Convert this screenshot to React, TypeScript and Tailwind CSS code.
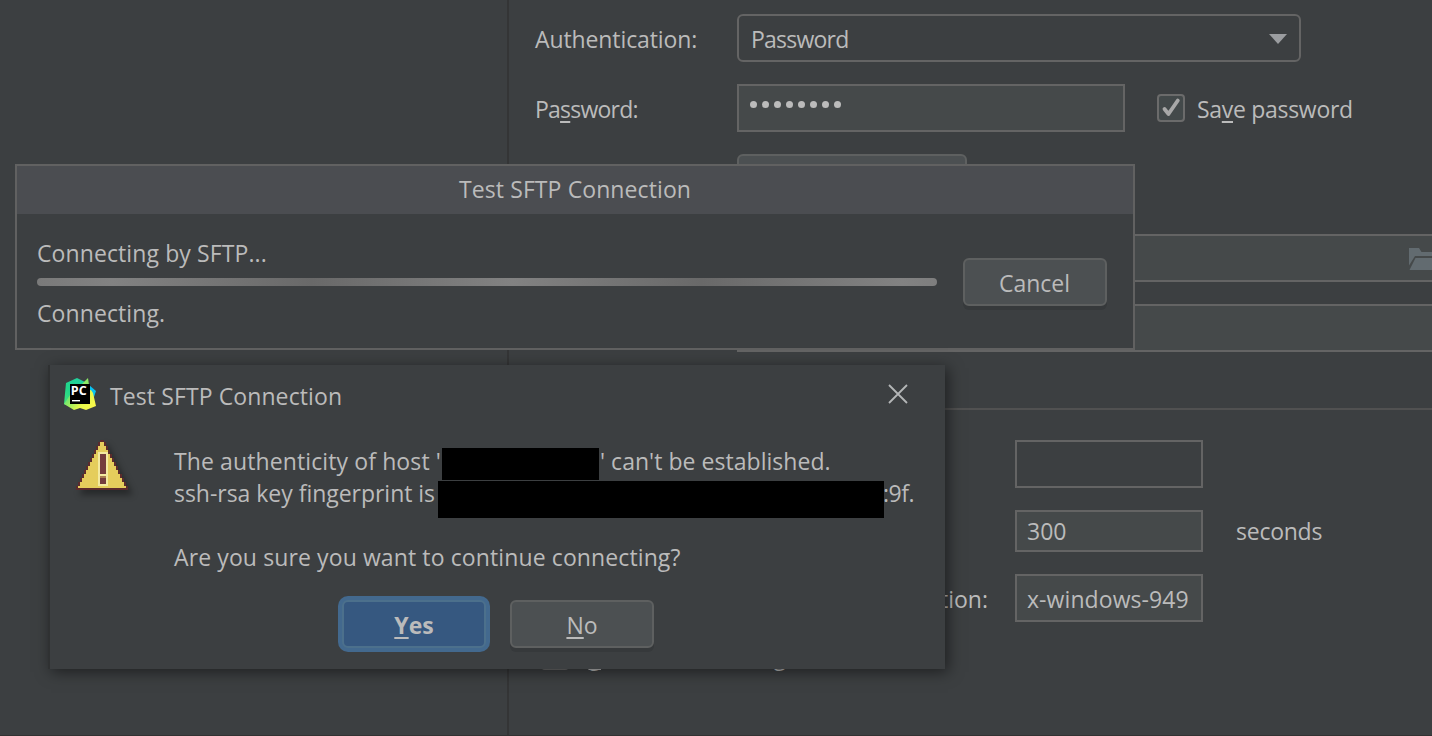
import type { ReactNode } from 'react';

const Mnemonic = ({ children }: { children: ReactNode }) => (
  <span className="underline decoration-2 underline-offset-[3px] [text-decoration-skip-ink:none]">{children}</span>
);

const Field = ({ className = '', children }: { className?: string; children?: ReactNode }) => (
  <div className={`flex shrink-0 items-center border-2 border-[#646464] ${className}`}>{children}</div>
);

function PyCharmLogo() {
  return (
    <svg width="32" height="32" viewBox="0 0 32 32" className="shrink-0">
      <defs>
        <linearGradient id="pcGreen" x1="0" y1="1" x2="0.7" y2="0">
          <stop offset="0" stopColor="#4be27a" />
          <stop offset="0.5" stopColor="#21d789" />
          <stop offset="1" stopColor="#21cfa0" />
        </linearGradient>
        <linearGradient id="pcYellow" x1="0" y1="0.3" x2="1" y2="0.8">
          <stop offset="0" stopColor="#4be27a" />
          <stop offset="0.6" stopColor="#e6f84b" />
          <stop offset="1" stopColor="#fcf84a" />
        </linearGradient>
      </defs>
      <path d="M25 7 L32 13 L30 19 L24 19Z" fill="#07c3f2" />
      <path d="M2 5 L13 0 L21 4 L25 15 L10 30 L0 26Z" fill="url(#pcGreen)" />
      <path d="M17 7 L24 0 L25 7Z" fill="#8bea66" />
      <path d="M0 26 L6 17 L27 12 L29 15 L32 28 L22 32 L16 30 L10 32Z" fill="url(#pcYellow)" />
      <rect x="6" y="6" width="20" height="20" fill="#000" />
      <text x="6.8" y="17.2" fill="#fff" fontSize="12.5" fontWeight="700" fontFamily="Open Sans, sans-serif" letterSpacing="0">
        PC
      </text>
      <rect x="8" y="22" width="8" height="1.4" fill="#fff" />
    </svg>
  );
}

function WarningIcon() {
  const rows = Array.from({ length: 24 }, (_, r) => ({ y: 2 * r, half: 2 + 2 * Math.ceil(r / 2) }));
  return (
    <svg width="52" height="50" viewBox="0 0 52 50" shapeRendering="crispEdges" className="shrink-0 overflow-visible drop-shadow-[4px_5px_3px_rgba(0,0,0,0.35)]">
      {rows.map(({ y, half }) => (
        <g key={y}>
          <rect x={26 - half} y={y} width={half * 2} height="2" fill="#5c2b2c" />
          {y > 0 && <rect x={28 - half} y={y} width={half * 2 - 4} height="2" fill="#e5cd5c" />}
        </g>
      ))}
      <rect x="0" y="48" width="52" height="2" fill="#5c2b2c" />
      <rect x="22" y="12" width="10" height="34" fill="#f3e9a0" />
      <rect x="24" y="14" width="6" height="20" fill="#743c3d" />
      <rect x="24" y="36" width="6" height="2" fill="#a87c50" />
      <rect x="24" y="38" width="6" height="6" fill="#743c3d" />
    </svg>
  );
}

function SettingsForm() {
  return (
    <div className="flex h-[736px] w-[1432px] overflow-hidden border-b border-[#323232]">
      <div className="w-[509px] shrink-0 border-r-2 border-[#343536]" />
      <div className="flex w-[923px] shrink-0 flex-col pt-[14px]">
        <div className="flex h-12 items-center pl-[26px]">
          <span className="w-[202px] shrink-0 pt-[2px] tracking-[-0.1px]">Authentication:</span>
          <Field className="h-12 w-[564px] justify-between rounded-[6px] pt-[1px] pr-3 pl-3">
            <span className="tracking-[-0.78px]">Password</span>
            <svg width="18" height="10" viewBox="0 0 18 10">
              <path d="M0 0H18L9 10Z" fill="#9b9da0" />
            </svg>
          </Field>
        </div>
        <div className="mt-[22px] flex h-12 items-center pl-[26px]">
          <span className="w-[202px] shrink-0 pt-[1px] tracking-[-0.78px]">
            Pa<Mnemonic>s</Mnemonic>sword:
          </span>
          <Field className="h-12 w-[388px] gap-[5px] bg-[#45494a] pb-[7px] pl-[11px]">
            {Array.from({ length: 8 }, (_, i) => (
              <span key={i} className="size-[7px] rounded-full bg-[#bbbbbb]" />
            ))}
          </Field>
          <div className="ml-8 flex size-7 items-center justify-center rounded-[4px] border-2 border-[#6b6b6b] bg-[#43494a]">
            <svg width="24" height="24" viewBox="0 0 24 24" fill="none" stroke="#a8a8a8" strokeWidth="3.8" strokeLinecap="round" strokeLinejoin="round" className="shrink-0">
              <path d="M5.5 13L9.5 18L18.8 4.5" />
            </svg>
          </div>
          <span className="pt-[1px] pl-3 tracking-[-0.3px]">
            Sa<Mnemonic>v</Mnemonic>e password
          </span>
        </div>
        <div className="mt-[22px] ml-[228px] h-12 w-[230px] rounded-[6px] border-2 border-[#5e6060] bg-[#4c5052]" />
        <Field className="mt-8 ml-[228px] h-12 w-[720px] bg-[#45494a] pl-[670px]">
          <svg width="30" height="22" viewBox="0 0 30 22" className="mt-0.5 shrink-0">
            <path d="M0 0H10L12.5 4H28V8H6L0 17.5Z" fill="#626b70" />
            <path d="M6.5 10H30L24 22H0.5Z" fill="#626b70" />
          </svg>
        </Field>
        <Field className="mt-[22px] ml-[228px] h-12 w-[720px] bg-[#45494a]" />
        <div className="mt-14 h-0.5 bg-[#515151]" />
        <div className="mt-[30px] flex h-12 pl-[506px]">
          <Field className="w-[188px]" />
        </div>
        <div className="mt-[22px] flex h-[42px] items-center pl-[506px]">
          <Field className="h-[42px] w-[188px] bg-[#45494a] pl-[10px]">300</Field>
          <span className="pl-[33px] tracking-[-0.25px]">seconds</span>
        </div>
        <div className="mt-[22px] flex h-12 items-center">
          <span className="w-[479px] shrink-0 pt-[2px] text-right">communication:</span>
          <Field className="ml-[27px] h-12 w-[188px] bg-[#45494a] pt-[2px] pl-[10px] tracking-[0.08px]">x-windows-949</Field>
        </div>
        <div className="mt-5 flex h-7 items-center pl-[32px]">
          <div className="size-7 rounded-[4px] border-2 border-[#6b6b6b] bg-[#43494a]" />
          <span className="pl-[13px]">
            I<Mnemonic>g</Mnemonic>nore info messages
          </span>
        </div>
      </div>
    </div>
  );
}

function ProgressDialog() {
  return (
    <div className="absolute top-[164px] left-[15px] flex h-[186px] w-[1120px] flex-col border-2 border-[#616161] bg-[#3c3f41]">
      <div className="flex h-12 items-center justify-center bg-[#4b4d51] pb-[2px] tracking-[0.1px]">Test SFTP Connection</div>
      <div className="flex pl-5">
        <div className="flex w-[900px] flex-col pt-[23px] tracking-[0.1px]">
          <span className="h-8">Connecting by SFTP...</span>
          <div className="mt-[9px] h-2 rounded-full bg-[linear-gradient(90deg,#7a7a7a_0px,#828282_75px,#696969_275px,#828282_475px,#696969_665px,#828282_865px,#7e7e7e_900px)]" />
          <span className="mt-[11px] h-8">Connecting.</span>
        </div>
        <div className="mt-11 ml-[26px] flex h-12 w-36 items-center justify-center rounded-[6px] border-2 border-[#5e6060] bg-[#4c5052] pt-[1px] pr-px shadow-[0_4px_0_#36393b]">
          Cancel
        </div>
      </div>
    </div>
  );
}

function ConfirmDialog() {
  return (
    <div className="absolute top-[365px] left-[48px] flex h-[304px] w-[897px] flex-col border-l-2 border-[#2f3132] bg-[#3c3f41] shadow-[3px_3px_14px_rgba(0,0,0,0.5)]">
      <div className="flex h-[59px] items-center pl-[14px]">
        <div className="pb-px">
          <PyCharmLogo />
        </div>
        <span className="grow pt-[2px] pl-[14px] tracking-[0.1px]">Test SFTP Connection</span>
        <svg width="20" height="20" viewBox="0 0 20 20" fill="none" stroke="#b4b6b7" strokeWidth="1.8" className="mr-[37px] mb-[1px]">
          <path d="M1 1L19 19M19 1L1 19" />
        </svg>
      </div>
      <div className="flex pt-[16px] pl-[26px]">
        <WarningIcon />
        <div className="flex flex-col pt-[5px] pl-[46px]">
          <div className="flex h-8">
            <span className="w-[268px] shrink-0 tracking-[0.11px]">The authenticity of host '</span>
            <span className="mt-[3px] h-8 w-[157px] shrink-0 bg-black" />
            <span className="pl-px tracking-[0.04px]">' can't be established.</span>
          </div>
          <div className="flex h-8">
            <span className="w-[264px] shrink-0 tracking-[-0.03px]">ssh-rsa key fingerprint is</span>
            <span className="mt-1 h-[37px] w-[446px] shrink-0 bg-black" />
            <span className="-ml-px tracking-[-0.5px]">:9f.</span>
          </div>
          <div className="mt-8 h-8 tracking-[0.11px]">Are you sure you want to continue connecting?</div>
        </div>
      </div>
      <div className="mt-[27px] flex items-start gap-6 pl-[292px]">
        <div className="flex h-12 w-36 items-center justify-center rounded-[6px] border-2 border-[#4c708c] bg-[#365880] pt-[2px] font-bold shadow-[0_0_0_4px_#43698e]">
          <Mnemonic>Y</Mnemonic>es
        </div>
        <div className="flex h-12 w-36 items-center justify-center rounded-[6px] border-2 border-[#5e6060] bg-[#4c5052] pt-[2px] shadow-[0_4px_0_#36393b]">
          <Mnemonic>N</Mnemonic>o
        </div>
      </div>
    </div>
  );
}

export default function App() {
  return (
    <div className="relative h-[736px] w-[1432px] overflow-hidden bg-[#3c3f41] font-['Open_Sans','Noto_Sans',sans-serif] text-[23px] leading-8 whitespace-nowrap text-[#bbbbbb]">
      <SettingsForm />
      <ProgressDialog />
      <ConfirmDialog />
    </div>
  );
}
